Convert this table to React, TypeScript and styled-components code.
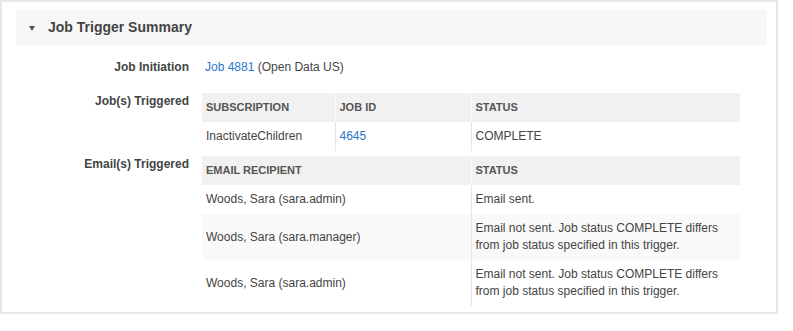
import React from "react";
import styled, { createGlobalStyle } from "styled-components";

const Global = createGlobalStyle`
  html, body { margin: 0; padding: 0; background: #ffffff; }
  body { font-family: "Liberation Sans", Arial, Helvetica, sans-serif; color: #444; }
`;

const Panel = styled.section`
  box-sizing: border-box;
  width: 778px;
  height: 314px;
  border: 2px solid #e8e8e8;
  padding: 8px 9px 6px 14px;
  background: #fff;
`;

const Header = styled.div`
  display: flex;
  align-items: center;
  height: 35px;
  background: #f7f7f7;
  padding-left: 13px;
  gap: 13px;
`;

const Caret = styled.span`
  width: 0;
  height: 0;
  border-left: 3px solid transparent;
  border-right: 3px solid transparent;
  border-top: 5px solid #555;
  margin-top: 1px;
`;

const Title = styled.h2`
  margin: 0;
  font-size: 14px;
  font-weight: bold;
  color: #444;
  line-height: 17px;
`;

const Body = styled.div`
  padding: 14px 27px 0 0;
  display: flex;
  flex-direction: column;
`;

const Field = styled.div<{ $gap: number }>`
  display: grid;
  grid-template-columns: 173px 1fr;
  column-gap: 13px;
  margin-bottom: ${(p) => p.$gap}px;
`;

const Label = styled.div`
  text-align: right;
  font-size: 12px;
  font-weight: bold;
  line-height: 17px;
  color: #444;
`;

const Value = styled.div`
  font-size: 12px;
  line-height: 17px;
  color: #444;
  padding-left: 3px;
`;

const Link = styled.a`
  color: #2a78c8;
  text-decoration: none;
`;

const Table = styled.table`
  width: 538px;
  border-collapse: collapse;
  table-layout: fixed;
  font-size: 12px;
`;

const Th = styled.th<{ $w?: string }>`
  box-sizing: border-box;
  width: ${(p) => p.$w ?? "auto"};
  background: #f1f1f1;
  text-align: left;
  font-size: 11px;
  font-weight: bold;
  color: #555;
  line-height: 17px;
  padding: 6px 5px 6px 4px;
  & + & { border-left: 1px solid #fafafa; }
`;

const Tr = styled.tr<{ $striped?: boolean }>`
  background: ${(p) => (p.$striped ? "#f9f9f9" : "#fff")};
`;

const Td = styled.td`
  vertical-align: top;
  color: #444;
  line-height: 17px;
  padding: 6px 5px 6px 4px;
  & + & { border-left: 1px solid #e6e6e6; }
`;

const TdMid = styled(Td)`
  vertical-align: middle;
`;

const emails = [
  { who: "Woods, Sara (sara.admin)", status: "Email sent." },
  {
    who: "Woods, Sara (sara.manager)",
    status: "Email not sent. Job status COMPLETE differs from job status specified in this trigger.",
  },
  {
    who: "Woods, Sara (sara.admin)",
    status: "Email not sent. Job status COMPLETE differs from job status specified in this trigger.",
  },
];

export default function App() {
  return (
    <>
      <Global />
      <Panel>
        <Header>
          <Caret />
          <Title>Job Trigger Summary</Title>
        </Header>
        <Body>
          <Field $gap={17}>
            <Label>Job Initiation</Label>
            <Value>
              <Link href="#">Job 4881</Link> (Open Data US)
            </Value>
          </Field>
          <Field $gap={5}>
            <Label>Job(s) Triggered</Label>
            <Table>
              <thead>
                <tr>
                  <Th $w="133px">SUBSCRIPTION</Th>
                  <Th $w="136px">JOB ID</Th>
                  <Th>STATUS</Th>
                </tr>
              </thead>
              <tbody>
                <Tr>
                  <Td>InactivateChildren</Td>
                  <Td>
                    <Link href="#">4645</Link>
                  </Td>
                  <Td>COMPLETE</Td>
                </Tr>
              </tbody>
            </Table>
          </Field>
          <Field $gap={0}>
            <Label>Email(s) Triggered</Label>
            <Table>
              <thead>
                <tr>
                  <Th $w="269px">EMAIL RECIPIENT</Th>
                  <Th>STATUS</Th>
                </tr>
              </thead>
              <tbody>
                {emails.map((e, i) => (
                  <Tr key={i} $striped={i === 1}>
                    <TdMid>{e.who}</TdMid>
                    <Td>{e.status}</Td>
                  </Tr>
                ))}
              </tbody>
            </Table>
          </Field>
        </Body>
      </Panel>
    </>
  );
}
